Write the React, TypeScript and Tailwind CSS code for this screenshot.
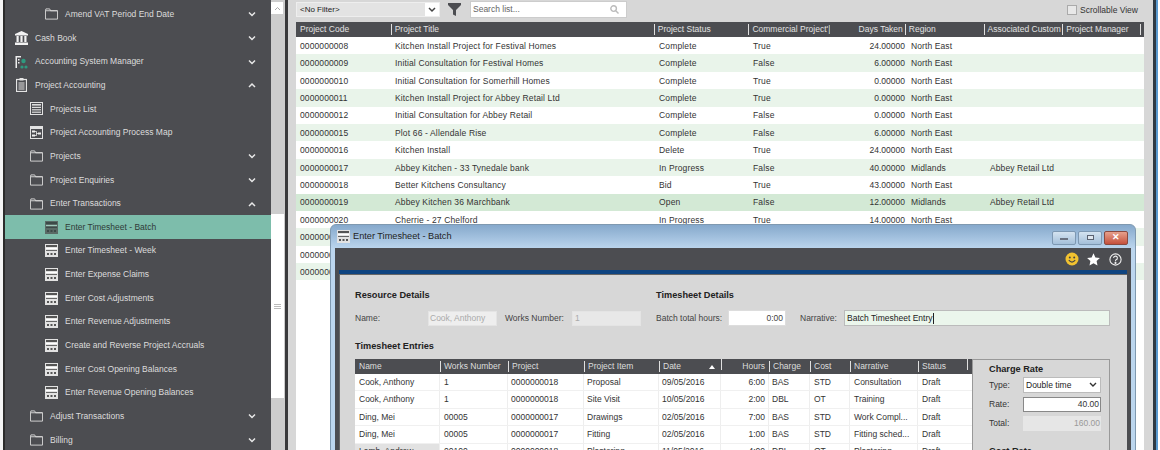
import React from "react";

const font = "font-['Liberation_Sans',Arial,sans-serif]";

function Chevron({ up }: { up?: boolean }) {
  return (
    <svg width="8" height="6" viewBox="0 0 8 6" className="absolute left-[243px] top-1/2 -translate-y-1/2" fill="none" stroke="#e8e8e8" strokeWidth="1.5">
      <path d={up ? "M1 5 L4 2 L7 5" : "M1 1.5 L4 4.5 L7 1.5"} />
    </svg>
  );
}

function Folder() {
  return (
    <svg width="14" height="12" viewBox="0 0 14 12" fill="none" stroke="#d8d8d8" strokeWidth="1">
      <path d="M0.5 2.5 V11.5 H13.5 V2.5 H6 L5 0.5 H1 L0.5 2.5 H13.5" />
    </svg>
  );
}

function Sheet({ dark }: { dark?: boolean }) {
  return (
    <svg width="13" height="13" viewBox="0 0 13 13">
      <rect x="0" y="0" width="13" height="13" fill={dark ? "#5a6a66" : "#e2e2e2"} />
      <rect x="1" y="1" width="11" height="2" fill={dark ? "#3c4a48" : "#555"} />
      <rect x="1" y="4" width="11" height="1" fill={dark ? "#9ec9bb" : "#fff"} />
      <rect x="1" y="6" width="11" height="1" fill={dark ? "#3c4a48" : "#666"} />
      <rect x="2" y="9" width="2" height="2" fill={dark ? "#3c4a48" : "#555"} />
      <rect x="5.5" y="9" width="2" height="2" fill={dark ? "#3c4a48" : "#555"} />
      <rect x="9" y="9" width="2" height="2" fill={dark ? "#3c4a48" : "#555"} />
    </svg>
  );
}

function ListIcon() {
  return (
    <svg width="13" height="13" viewBox="0 0 13 13">
      <rect x="0.5" y="0.5" width="12" height="12" fill="#4c4d51" stroke="#e2e2e2" />
      <rect x="2" y="2" width="9" height="1.6" fill="#ddd" />
      <rect x="2" y="4.8" width="9" height="1.2" fill="#ddd" />
      <rect x="2" y="7.2" width="9" height="1.2" fill="#ddd" />
      <rect x="2" y="9.6" width="9" height="1.2" fill="#ddd" />
    </svg>
  );
}

function MapIcon() {
  return (
    <svg width="13" height="13" viewBox="0 0 13 13">
      <rect x="0.5" y="0.5" width="12" height="12" fill="#4c4d51" stroke="#e2e2e2" />
      <rect x="0" y="0" width="13" height="3" fill="#e2e2e2" />
      <rect x="2" y="4.5" width="3" height="2" fill="#eee" />
      <rect x="2" y="8.5" width="3" height="2" fill="#eee" />
      <rect x="8" y="6.5" width="3" height="2" fill="#eee" />
      <path d="M5 5.5 H6.5 V9.5 H5 M6.5 7.5 H8" stroke="#eee" strokeWidth="0.8" fill="none" />
    </svg>
  );
}

function Bank() {
  return (
    <svg width="13" height="14" viewBox="0 0 13 14" fill="#f2f2f2">
      <path d="M6.5 0 L13 3 V4.5 H0 V3 Z" />
      <rect x="1.5" y="5" width="2.2" height="6" />
      <rect x="5.4" y="5" width="2.2" height="6" />
      <rect x="9.3" y="5" width="2.2" height="6" />
      <rect x="0" y="11.5" width="13" height="2.5" />
    </svg>
  );
}

function Asm() {
  return (
    <svg width="13" height="14" viewBox="0 0 13 14">
      <path d="M0.5 1 H6 V2.5 H2 V13 H0.5 Z" fill="#eee" />
      <rect x="3" y="4" width="1.5" height="1.5" fill="#eee" />
      <rect x="3" y="7" width="1.5" height="1.5" fill="#eee" />
      <circle cx="8.5" cy="6" r="2.2" fill="#2f9a80" />
      <circle cx="7" cy="12" r="1.6" fill="#2f9a80" />
      <circle cx="11" cy="12" r="1.6" fill="#2f9a80" />
    </svg>
  );
}

function Clip() {
  return (
    <svg width="11" height="14" viewBox="0 0 11 14" fill="none" stroke="#e4e4e4">
      <rect x="0.5" y="1.5" width="10" height="12" strokeWidth="1.2" />
      <rect x="3.5" y="0" width="4" height="2.5" fill="#e4e4e4" stroke="none" />
      <path d="M2.5 5 H8.5 M2.5 7 H8.5 M2.5 9 H8.5 M2.5 11 H8.5" strokeWidth="1" />
    </svg>
  );
}

type Nav = { t: string; lvl: 0 | 1 | 2; icon: React.ReactNode; chev?: "up" | "down"; active?: boolean };

const nav: Nav[] = [
  { t: "Amend VAT Period End Date", lvl: 2, icon: <Folder />, chev: "down" },
  { t: "Cash Book", lvl: 0, icon: <Bank />, chev: "down" },
  { t: "Accounting System Manager", lvl: 0, icon: <Asm />, chev: "down" },
  { t: "Project Accounting", lvl: 0, icon: <Clip />, chev: "up" },
  { t: "Projects List", lvl: 1, icon: <ListIcon /> },
  { t: "Project Accounting Process Map", lvl: 1, icon: <MapIcon /> },
  { t: "Projects", lvl: 1, icon: <Folder />, chev: "down" },
  { t: "Project Enquiries", lvl: 1, icon: <Folder />, chev: "down" },
  { t: "Enter Transactions", lvl: 1, icon: <Folder />, chev: "up" },
  { t: "Enter Timesheet - Batch", lvl: 2, icon: <Sheet dark />, active: true },
  { t: "Enter Timesheet - Week", lvl: 2, icon: <Sheet /> },
  { t: "Enter Expense Claims", lvl: 2, icon: <Sheet /> },
  { t: "Enter Cost Adjustments", lvl: 2, icon: <Sheet /> },
  { t: "Enter Revenue Adjustments", lvl: 2, icon: <Sheet /> },
  { t: "Create and Reverse Project Accruals", lvl: 2, icon: <Sheet /> },
  { t: "Enter Cost Opening Balances", lvl: 2, icon: <Sheet /> },
  { t: "Enter Revenue Opening Balances", lvl: 2, icon: <Sheet /> },
  { t: "Adjust Transactions", lvl: 1, icon: <Folder />, chev: "down" },
  { t: "Billing", lvl: 1, icon: <Folder />, chev: "down" },
];

const projects = [
  ["0000000008", "Kitchen Install Project for Festival Homes", "Complete", "True", "24.00000", "North East", ""],
  ["0000000009", "Initial Consultation for Festival Homes", "Complete", "False", "6.00000", "North East", ""],
  ["0000000010", "Initial Consultation for Somerhill Homes", "Complete", "True", "0.00000", "North East", ""],
  ["0000000011", "Kitchen Install Project for Abbey Retail Ltd", "Complete", "True", "0.00000", "North East", ""],
  ["0000000012", "Initial Consultation for Abbey Retail", "Complete", "False", "0.00000", "North East", ""],
  ["0000000015", "Plot 66 - Allendale Rise", "Complete", "False", "6.00000", "North East", ""],
  ["0000000016", "Kitchen Install", "Delete", "True", "24.00000", "North East", ""],
  ["0000000017", "Abbey Kitchen - 33 Tynedale bank", "In Progress", "False", "40.00000", "Midlands", "Abbey Retail Ltd"],
  ["0000000018", "Better Kitchens Consultancy", "Bid", "True", "43.00000", "North East", ""],
  ["0000000019", "Abbey Kitchen 36 Marchbank", "Open", "False", "12.00000", "Midlands", "Abbey Retail Ltd"],
  ["0000000020", "Cherrie - 27 Chelford", "In Progress", "True", "14.00000", "North East", ""],
  ["0000000", "", "", "", "", "", ""],
  ["0000000", "", "", "", "", "", ""],
  ["0000000", "", "", "", "", "", ""],
];

const rowBg = (i: number) => {
  if (i === 9) return "bg-[#d3e9d5]";
  return i % 2 === 1 ? "bg-[#e9f4ea]" : "bg-white";
};

const entries = [
  ["Cook, Anthony", "1", "0000000018", "Proposal", "09/05/2016", "6:00", "BAS", "STD", "Consultation", "Draft"],
  ["Cook, Anthony", "1", "0000000018", "Site Visit", "10/05/2016", "2:00", "DBL", "OT", "Training", "Draft"],
  ["Ding, Mei", "00005", "0000000017", "Drawings", "02/05/2016", "7:00", "BAS", "STD", "Work Compl...", "Draft"],
  ["Ding, Mei", "00005", "0000000017", "Fitting", "02/05/2016", "1:00", "BAS", "STD", "Fitting sched...", "Draft"],
  ["Lamb, Andrew", "00100", "0000000018", "Plastering", "11/05/2016", "4:00", "DBL", "OT", "Plastering", "Draft"],
];

function Sep() {
  return <span className="inline-block w-px h-[11px] bg-[#e0e0e0] mr-[3px] shrink-0" />;
}

function Th({ children, w, right }: { children?: React.ReactNode; w: string; right?: boolean }) {
  return (
    <div className={`flex items-center overflow-hidden whitespace-nowrap ${w} ${right ? "justify-end pr-[2px]" : ""}`}>
      {children}
    </div>
  );
}

export default function App() {
  return (
    <div className={`${font} relative w-[1160px] h-[450px] overflow-hidden bg-white flex text-[8.5px] text-[#333]`}>
      <div className="w-[5px] h-full bg-[#2b2b2b] shrink-0 border-l-[3px] border-[#f4f4f4]" />
      <aside className="w-[266px] h-full bg-[#4c4d51] shrink-0 flex flex-col pt-[2.6px]">
        {nav.map((n) => (
          <div
            key={n.t}
            className={`relative h-[23.65px] shrink-0 flex items-center ${n.lvl === 0 ? "pl-[10px]" : n.lvl === 1 ? "pl-[25px]" : "pl-[40px]"} ${n.active ? "bg-[#7dbdab] text-[#2f3a38]" : "text-[#dcdcdc]"}`}
          >
            <span className="flex justify-center items-center shrink-0 w-[13px] mr-[7px]">{n.icon}</span>
            <span>{n.t}</span>
            {n.chev && <Chevron up={n.chev === "up"} />}
          </div>
        ))}
      </aside>
      <div className="w-[14px] h-full bg-[#cdcdcd] shrink-0 flex flex-col pt-[2px] relative">
        <div className="w-[12px] h-[12px] flex items-center justify-center bg-white">
          <svg width="7" height="5" viewBox="0 0 7 5" fill="none" stroke="#aaa" strokeWidth="1"><path d="M1 4 L3.5 1.5 L6 4" /></svg>
        </div>
        <div className="w-full h-[200px] shrink-0" />
        <div className="w-[13px] h-[184px] shrink-0 bg-white flex flex-col items-center justify-center gap-px">
          <div className="w-[7px] h-px bg-[#bbb]" /><div className="w-[7px] h-px bg-[#bbb]" /><div className="w-[7px] h-px bg-[#bbb]" />
        </div>
      </div>
      <div className="w-[3px] h-full bg-[#3a3a3c] shrink-0" />
      <main className="w-[865px] h-full bg-[#d7d7d7] pl-[8px] shrink-0">
        <div className="w-[848px] h-full flex flex-col">
          <div className="h-[22px] flex items-start pt-[1px] shrink-0">
            <div className="w-[144px] h-[15px] mt-[1px] bg-[#e3e3e3] flex items-center justify-between pl-[3px] text-[#222] text-[8px] border border-[#eee]">
              <span>&lt;No Filter&gt;</span>
              <span className="w-[14px] h-full bg-white flex items-center justify-center">
                <svg width="8" height="6" viewBox="0 0 8 6" fill="none" stroke="#444" strokeWidth="1.5"><path d="M1 1 L4 4 L7 1" /></svg>
              </span>
            </div>
            <svg width="13" height="13" viewBox="0 0 13 13" className="ml-[8px] mt-[2px]" fill="#4c4d51"><path d="M0 0 H13 V2 L8 7 V13 L5 11.5 V7 L0 2 Z" /></svg>
            <div className="ml-[9px] w-[157px] h-[17px] bg-white border border-[#ccc] flex items-center justify-between pl-[2px] pr-[7px] text-[#666]">
              <span>Search list...</span>
              <svg width="9" height="9" viewBox="0 0 9 9" fill="none" stroke="#bbb" strokeWidth="1.4"><circle cx="3.6" cy="3.6" r="2.8" /><path d="M6 6 L8.5 8.5" /></svg>
            </div>
            <div className="ml-auto mr-[6px] mt-[3px] flex items-center text-[#333]">
              <span className="w-[10px] h-[10px] bg-[#e8e8e8] border border-[#aaa] mr-[3px]" />
              Scrollable View
            </div>
          </div>
          <div className="h-[15px] bg-[#4c4d51] text-[#e2e2e2] flex items-center shrink-0 pl-[4px]">
            <Th w="w-[91px]">Project Code</Th>
            <Th w="w-[264px]"><Sep />Project Title</Th>
            <Th w="w-[95px]"><Sep />Project Status</Th>
            <Th w="w-[82px]"><Sep />Commercial Project'|</Th>
            <Th w="w-[75px]" right>Days Taken</Th>
            <Th w="w-[79px]"><Sep />Region</Th>
            <Th w="w-[79px]"><Sep />Associated Custom</Th>
            <Th w="w-[78px]"><Sep />Project Manager</Th>
            <Sep />
          </div>
          <div className="flex-1 bg-white">
            {projects.map((r, i) => (
              <div key={i} className={`h-[17.4px] flex items-center pl-[4px] pt-[1px] ${rowBg(i)}`}>
                <div className="w-[95px] tracking-[0.1px]">{r[0]}</div>
                <div className="w-[264px] tracking-[0.15px]">{r[1]}</div>
                <div className="w-[94px] tracking-[0.15px]">{r[2]}</div>
                <div className="w-[70px] tracking-[0.15px]">{r[3]}</div>
                <div className="w-[88px] text-right pr-[6px]">{r[4]}</div>
                <div className="w-[79px] tracking-[0.1px]">{r[5]}</div>
                <div className="tracking-[0.1px]">{r[6]}</div>
              </div>
            ))}
          </div>
        </div>
      </main>
      <div className="w-[5px] h-full bg-[#2f3a44] shrink-0 border-r-2 border-[#5a9ad0]" />
      <div className="w-[2px] h-full bg-white shrink-0" />

      {/* Dialog window */}
      <div className="absolute left-[330px] top-[224px] w-[806px] h-[240px] rounded-t-[6px] bg-linear-to-b from-[#86a9cc] to-[#bcd6ee] to-10% border border-[#7f99b0] flex flex-col px-[4px]">
        <div className="h-[23px] flex items-center shrink-0">
          <span className="ml-[2px] mr-[3px]"><Sheet /></span>
          <span className="text-[9.2px] text-[#222]">Enter Timesheet - Batch</span>
          <div className="ml-auto mr-[3px] mt-[2px] flex gap-[2px] items-center">
            <div className="w-[24px] h-[14px] rounded-[2px] bg-linear-to-b from-[#d4e3f0] to-[#a4c0da] border border-[#7d98b2] flex items-center justify-center"><span className="block w-[8px] h-[2px] bg-[#6a7280] mt-[3px]" /></div>
            <div className="w-[24px] h-[14px] rounded-[2px] bg-linear-to-b from-[#d4e3f0] to-[#a4c0da] border border-[#7d98b2] flex items-center justify-center"><span className="block w-[7px] h-[5px] border border-[#5a6270] bg-[#dfe7ef]" /></div>
            <div className="w-[24px] h-[14px] rounded-[2px] bg-linear-to-b from-[#e6a08c] to-[#c4503c] border border-[#8a4a40] flex items-center justify-center text-white text-[9px] font-bold leading-none">✕</div>
          </div>
        </div>
        <div className="flex-1 bg-[#4c4d51] flex flex-col">
          <div className="h-[22px] flex items-center justify-end pr-[9px] shrink-0">
            <svg width="14" height="14" viewBox="0 0 14 14" className="mr-[8px]"><circle cx="7" cy="7" r="6.5" fill="#f2c230" /><circle cx="4.8" cy="5.5" r="1" fill="#444" /><circle cx="9.2" cy="5.5" r="1" fill="#444" /><path d="M3.8 8.2 Q7 12 10.2 8.2" stroke="#444" strokeWidth="1.1" fill="none" /></svg>
            <svg width="13" height="13" viewBox="0 0 13 13" fill="#fff" className="mr-[9px]"><path d="M6.5 0.3 L8.4 4.4 L12.9 4.9 L9.6 8 L10.5 12.5 L6.5 10.2 L2.5 12.5 L3.4 8 L0.1 4.9 L4.6 4.4 Z" /></svg>
            <svg width="13" height="13" viewBox="0 0 13 13" fill="none" stroke="#eee" strokeWidth="1.1"><circle cx="6.5" cy="6.5" r="5.6" /><path d="M4.6 5 A1.9 1.9 0 1 1 6.9 6.9 Q6.5 7.2 6.5 8.2" /><circle cx="6.5" cy="9.9" r="0.5" fill="#eee" /></svg>
          </div>
          <div className="mx-[4px] h-[4px] bg-[#0f4480] shrink-0" />
          <div className="mx-[4px] flex-1 bg-[#d7d7d7] border-l border-t border-[#666] pl-[15px] pt-[15px]">
            <div className="flex font-bold text-[#222] h-[12px] items-center text-[9.2px]">
              <div className="w-[301px]">Resource Details</div>
              <div>Timesheet Details</div>
            </div>
            <div className="flex items-center h-[16px] mt-[8px] text-[#444]">
              <div className="w-[73px]">Name:</div>
              <div className="w-[69px] h-[15px] bg-[#eeeeee] border border-[#e4e4e4] text-[#aaa] pl-[1px] flex items-center">Cook, Anthony</div>
              <div className="w-[75px] pl-[8px] whitespace-nowrap">Works Number:</div>
              <div className="w-[69px] h-[15px] bg-[#e8e8e8] border border-[#e4e4e4] text-[#aaa] pl-[2px] flex items-center">1</div>
              <div className="w-[87px] pl-[15px] whitespace-nowrap">Batch total hours:</div>
              <div className="w-[58px] h-[16px] bg-white border border-[#ddd] pr-[2px] flex items-center justify-end">0:00</div>
              <div className="w-[50px] pl-[14px]">Narrative:</div>
              <div className="ml-[8px] w-[266px] h-[16px] bg-[#ebf6ec] border border-[#bbb] pl-[2px] flex items-center text-[#222]">Batch Timesheet Entry<span className="w-px h-[11px] bg-[#222]" /></div>
            </div>
            <div className="font-bold text-[#222] mt-[15px] h-[12px] flex items-center text-[9.2px]">Timesheet Entries</div>
            <div className="flex mt-[6px] items-start">
              <div className="w-[617px]">
                <div className="h-[15px] bg-[#4c4d51] text-[#ddd] flex items-center pl-[4px]">
                  <div className="w-[81px]">Name</div>
                  <div className="w-[68px] flex items-center"><Sep />Works Number</div>
                  <div className="w-[76px] flex items-center"><Sep />Project</div>
                  <div className="w-[75px] flex items-center"><Sep />Project Item</div>
                  <div className="w-[62px] flex items-center"><Sep />Date<span className="ml-auto mr-[6px] w-0 h-0 border-x-[3.5px] border-x-transparent border-b-[4px] border-b-white" /></div>
                  <div className="w-[48px] flex items-center justify-end pr-[4px]"><span className="mr-auto"><Sep /></span>Hours</div>
                  <div className="w-[41px] flex items-center"><Sep />Charge</div>
                  <div className="w-[40px] flex items-center"><Sep />Cost</div>
                  <div className="w-[68px] flex items-center"><Sep />Narrative</div>
                  <div className="flex items-center flex-1"><Sep />Status<span className="ml-auto mr-[1px]"><Sep /></span></div>
                </div>
                {entries.map((r, i) => (
                  <div key={i} className="h-[17.4px] bg-white flex items-center border-b border-[#f0f0f0] text-[#333]">
                    <div className={`w-[85px] h-full pl-[4px] flex items-center border-r border-[#eee] ${i === 4 ? "bg-[#e2e2e2]" : ""}`}>{r[0]}</div>
                    <div className="w-[68px] h-full pl-[4px] flex items-center border-r border-[#eee]">{r[1]}</div>
                    <div className="w-[76px] h-full pl-[3px] flex items-center border-r border-[#eee]">{r[2]}</div>
                    <div className="w-[75px] h-full pl-[3px] flex items-center border-r border-[#eee]">{r[3]}</div>
                    <div className="w-[62px] h-full pl-[3px] flex items-center border-r border-[#eee]">{r[4]}</div>
                    <div className="w-[48px] h-full pr-[3px] flex items-center justify-end border-r border-[#eee]">{r[5]}</div>
                    <div className="w-[41px] h-full pl-[3px] flex items-center border-r border-[#eee]">{r[6]}</div>
                    <div className="w-[40px] h-full pl-[4px] flex items-center border-r border-[#eee]">{r[7]}</div>
                    <div className="w-[68px] h-full pl-[4px] flex items-center border-r border-[#eee] whitespace-nowrap overflow-hidden">{r[8]}</div>
                    <div className="pl-[4px]">{r[9]}</div>
                  </div>
                ))}
              </div>
              <div className="w-[138px] h-[120px] shrink-0 border border-[#999] bg-[#d7d7d7] pl-[16px] pr-[8px] pt-[4px] text-[#333]">
                <div className="font-bold text-[#222] h-[12px] flex items-center text-[9.2px]">Charge Rate</div>
                <div className="flex items-center mt-[1px]">
                  <div className="w-[34px]">Type:</div>
                  <div className="flex-1 h-[16px] bg-white border border-[#bbb] flex items-center justify-between pl-[2px] pr-[3px] text-[#222]">
                    Double time
                    <svg width="8" height="6" viewBox="0 0 8 6" fill="none" stroke="#333" strokeWidth="1.4"><path d="M1 1 L4 4 L7 1" /></svg>
                  </div>
                </div>
                <div className="flex items-center mt-[4px]">
                  <div className="w-[34px]">Rate:</div>
                  <div className="flex-1 h-[15px] bg-white border border-[#888] pr-[1px] flex items-center justify-end">40.00</div>
                </div>
                <div className="flex items-center mt-[4px]">
                  <div className="w-[34px]">Total:</div>
                  <div className="flex-1 h-[15px] bg-[#e6e6e6] text-[#999] flex items-center justify-end pr-[1px]">160.00</div>
                </div>
                <div className="font-bold text-[#222] mt-[14px] text-[9.2px]">Cost Rate</div>
              </div>
            </div>
          </div>
        </div>
      </div>
    </div>
  );
}
